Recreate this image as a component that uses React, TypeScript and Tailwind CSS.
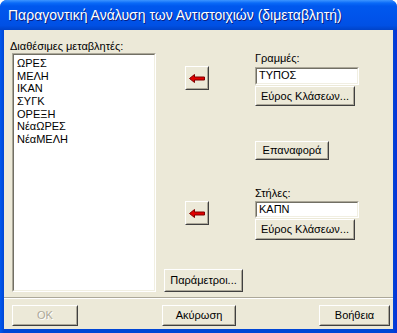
import React from "react";

const font = { fontFamily: '"Liberation Sans", Arial, sans-serif' };

function Btn({ children, className = "", disabled = false }: { children?: React.ReactNode; className?: string; disabled?: boolean }) {
  return (
    <div className={`border border-t-white border-l-white border-r-[#404040] border-b-[#404040] bg-[#ECE9D8] ${className}`}>
      <div className="w-full h-full border border-t-[#ECE9D8] border-l-[#ECE9D8] border-r-[#ACA899] border-b-[#ACA899] flex items-center justify-center">
        <span className={disabled ? "text-[#ACA899] [text-shadow:1px_1px_0_#fff]" : "text-black"}>{children}</span>
      </div>
    </div>
  );
}

function Sunken({ children, className = "" }: { children?: React.ReactNode; className?: string }) {
  return (
    <div className={`border border-t-[#ACA899] border-l-[#ACA899] border-r-white border-b-white ${className}`}>
      <div className="w-full h-full border border-t-[#716F64] border-l-[#716F64] border-r-[#F1EFE2] border-b-[#F1EFE2] bg-white">
        {children}
      </div>
    </div>
  );
}

function Arrow() {
  return (
    <svg width="16" height="9" viewBox="0 0 16 9">
      <polygon points="0.5,4.5 5.5,0.5 5.5,3 15.5,3 15.5,6 5.5,6 5.5,8.5" fill="#E00000" stroke="#800000" strokeWidth="1" />
    </svg>
  );
}

export default function App() {
  const items = ["ΩΡΕΣ", "ΜΕΛΗ", "ΙΚΑΝ", "ΣΥΓΚ", "ΟΡΕΞΗ", "ΝέαΩΡΕΣ", "ΝέαΜΕΛΗ"];
  return (
    <div className="w-[397px] h-[333px] bg-white text-[11px] leading-[13px] text-black" style={font}>
      <div className="w-full h-full flex flex-col rounded-t-[7px] overflow-hidden bg-[#0046D5]">
        <div className="h-[30px] shrink-0 flex items-center pl-[8px] bg-[linear-gradient(180deg,#3D95FF_0%,#0A6AF8_10%,#0058EE_20%,#0053EA_60%,#0050E4_85%,#0043C8_100%)]">
          <span className="text-white text-[14px] [text-shadow:1px_1px_0_#0A1E80]">Παραγοντική Ανάλυση των Αντιστοιχιών (διμεταβλητή)</span>
        </div>
        <div className="flex-1 flex px-[4px] pb-[4px] bg-[linear-gradient(90deg,#0058EE_0px,#0046D5_4px,#0046D5_calc(100%-4px),#0831D9_100%)]">
          <div className="flex-1 flex flex-col bg-[#ECE9D8]">
            <div className="h-[267px] flex">
              <div className="flex flex-col ml-[6px] pt-[10px] w-[146px]">
                <div className="h-[13px]">Διαθέσιμες μεταβλητές:</div>
                <Sunken className="ml-[2px] w-[144px] h-[239px]">
                  <div className="pl-[3px] pt-[2px] flex flex-col">
                    {items.map((t) => (
                      <div key={t} className="h-[12.7px] leading-[13px]">{t}</div>
                    ))}
                  </div>
                </Sunken>
              </div>
              <div className="flex flex-col ml-[8px] w-[79px]">
                <Btn className="ml-[21px] mt-[36px] w-[24px] h-[24px]"><Arrow /></Btn>
                <Btn className="ml-[21px] mt-[111px] w-[24px] h-[24px]"><Arrow /></Btn>
                <Btn className="mt-[44px] w-[79px] h-[23px]">Παράμετροι...</Btn>
              </div>
              <div className="flex flex-col ml-[12px] pt-[22px]">
                <div className="h-[13px]">Γραμμές:</div>
                <Sunken className="mt-[2px] w-[104px] h-[18px]">
                  <div className="pl-[2px] leading-[13px]">ΤΥΠΟΣ</div>
                </Sunken>
                <Btn className="mt-[1px] w-[100px] h-[20px]">Εύρος Κλάσεων...</Btn>
                <Btn className="mt-[35px] w-[74px] h-[19px]">Επαναφορά</Btn>
                <div className="mt-[27px] h-[13px]">Στήλες:</div>
                <Sunken className="mt-[1px] w-[104px] h-[17px]">
                  <div className="pl-[2px] leading-[13px]">ΚΑΠΝ</div>
                </Sunken>
                <Btn className="mt-[1px] w-[100px] h-[21px]">Εύρος Κλάσεων...</Btn>
              </div>
            </div>
            <div className="h-[1px] bg-[#ACA899]" />
            <div className="h-[1px] bg-white" />
            <div className="flex mt-[6px]">
              <Btn disabled className="ml-[8px] w-[66px] h-[21px]">OK</Btn>
              <Btn className="ml-[84px] w-[74px] h-[21px]">Ακύρωση</Btn>
              <Btn className="ml-[83px] w-[71px] h-[21px]">Βοήθεια</Btn>
            </div>
          </div>
        </div>
      </div>
    </div>
  );
}
